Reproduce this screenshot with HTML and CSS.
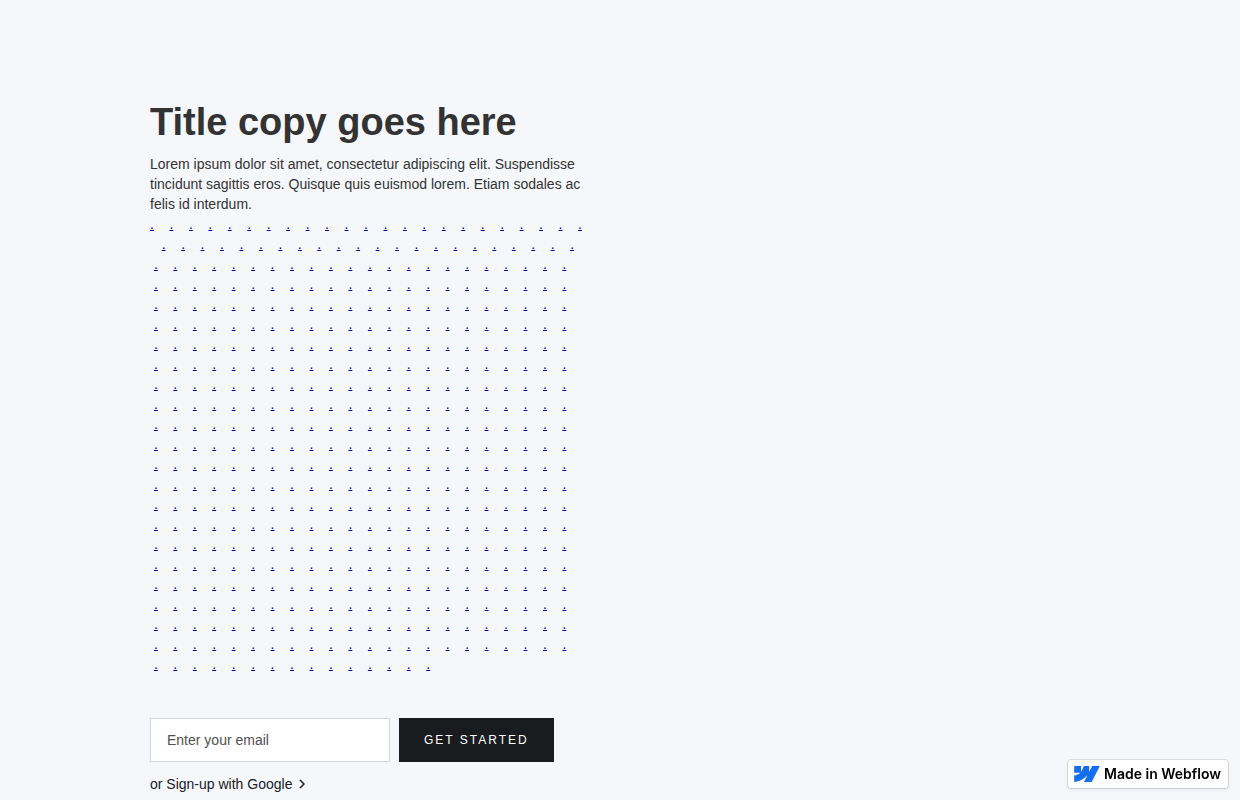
FILE: index.html
```html
<!DOCTYPE html>
<html lang="en">
<head>
  <meta charset="UTF-8">
  <meta name="viewport" content="width=device-width, initial-scale=1.0">
  <title>Title copy goes here</title>
  <link rel="stylesheet" href="styles.css">
</head>
<body>
  <main class="container">
    <section class="hero">
      <h1>Title copy goes here</h1>
      <p class="intro">Lorem ipsum dolor sit amet, consectetur adipiscing elit. Suspendisse tincidunt sagittis eros. Quisque quis euismod lorem. Etiam sodales ac felis id interdum.</p>
      <div id="links" class="links"></div>

      <form class="signup">
        <input type="email" class="email-field" name="email" placeholder="Enter your email" aria-label="Enter your email">
        <button type="submit" class="button">Get started</button>
      </form>

      <a class="google-link" href="#">
        <span>or Sign-up with Google</span>
        <svg class="chevron" viewBox="0 0 6 10" aria-hidden="true"><path d="M1 1l4 4-4 4" fill="none" stroke="currentColor" stroke-width="1.5"/></svg>
      </a>
    </section>
  </main>

  <a class="badge" href="#">
    <svg class="badge-logo" viewBox="0 0 1080 674" aria-hidden="true"><path fill="#146ef5" d="M1080 0L735.386 673.684H411.695L555.916 394.481H549.445C430.464 548.934 252.942 650.61 0 673.684V398.344C0 398.344 161.813 388.787 256.939 288.776H0V0H288.771V237.515L295.252 237.489L413.254 0H631.644V236.009L638.126 235.999L760.555 0H1080Z"/></svg>
    <span>Made in Webflow</span>
  </a>

  <script src="script.js"></script>
</body>
</html>
```
FILE: styles.css
```css
* {
  box-sizing: border-box;
}
body {
  margin: 0;
  background: #f5f7fb;
  color: #333;
  font-family: "Liberation Sans", Arial, sans-serif;
  font-size: 14px;
  line-height: 20px;
}
.container {
  max-width: 940px;
  margin: 0 auto;
  padding-top: 100px;
}
.hero {
  max-width: 435px;
}
.hero h1 {
  margin: 0 0 10px;
  font-size: 38px;
  line-height: 44px;
  font-weight: bold;
}
.intro {
  margin: 0;
}
.links a {
  color: #0000a0;
}
.signup {
  display: flex;
  gap: 9px;
  margin: 44px 0 12px;
}
.email-field {
  width: 240px;
  height: 44px;
  padding: 0 16px;
  border: 1px solid #d3d6db;
  border-radius: 0;
  background: #fff;
  color: #333;
  font: inherit;
}
.email-field::placeholder {
  color: #505050;
}
.button {
  height: 44px;
  padding: 0 25px;
  border: 0;
  background: #1a1b1f;
  color: #fff;
  font-family: inherit;
  font-size: 12px;
  line-height: 20px;
  letter-spacing: 2px;
  text-transform: uppercase;
  cursor: pointer;
}
.google-link {
  display: inline-flex;
  align-items: center;
  gap: 7px;
  color: #1a1b1f;
  text-decoration: none;
}
.chevron {
  width: 6px;
  height: 10px;
}
.badge {
  position: fixed;
  right: 12px;
  bottom: 12px;
  display: flex;
  align-items: center;
  gap: 4px;
  padding: 4px 7px 4px 6px;
  border-radius: 3px;
  background: #fff;
  box-shadow: 0 0 0 1px rgba(0, 0, 0, 0.1), 0 1px 3px rgba(0, 0, 0, 0.1);
  color: #000;
  font-family: Inter, sans-serif;
  font-size: 14px;
  font-weight: 600;
  text-decoration: none;
}
.badge-logo {
  width: 26px;
  height: 16px;
}
```
FILE: script.js
```js
const links = document.getElementById('links');
const total = 500;
const firstGroup = 23;
const nbsp = '\u00a0';

for (let i = 1; i <= total; i++) {
  const link = document.createElement('a');
  link.href = '#';
  link.textContent = '.';
  links.appendChild(link);

  if (i < total) {
    const gap = i === firstGroup ? ' ' + nbsp.repeat(3) : nbsp.repeat(2) + ' ' + nbsp;
    links.appendChild(document.createTextNode(gap));
  }
}
```
